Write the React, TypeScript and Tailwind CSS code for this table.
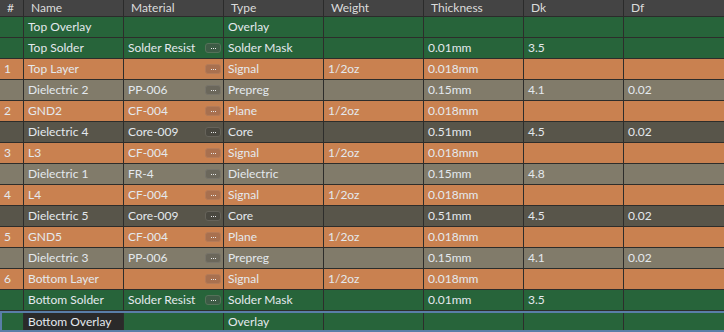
import React from "react";

type Kind = "green" | "orange" | "gray" | "core";

type Layer = {
  num: string;
  name: string;
  material: string;
  btn: boolean;
  type: string;
  weight: string;
  thickness: string;
  dk: string;
  df: string;
  kind: Kind;
  selected?: boolean;
};

const layers: Layer[] = [
  { num: "", name: "Top Overlay", material: "", btn: false, type: "Overlay", weight: "", thickness: "", dk: "", df: "", kind: "green" },
  { num: "", name: "Top Solder", material: "Solder Resist", btn: true, type: "Solder Mask", weight: "", thickness: "0.01mm", dk: "3.5", df: "", kind: "green" },
  { num: "1", name: "Top Layer", material: "", btn: true, type: "Signal", weight: "1/2oz", thickness: "0.018mm", dk: "", df: "", kind: "orange" },
  { num: "", name: "Dielectric 2", material: "PP-006", btn: true, type: "Prepreg", weight: "", thickness: "0.15mm", dk: "4.1", df: "0.02", kind: "gray" },
  { num: "2", name: "GND2", material: "CF-004", btn: true, type: "Plane", weight: "1/2oz", thickness: "0.018mm", dk: "", df: "", kind: "orange" },
  { num: "", name: "Dielectric 4", material: "Core-009", btn: true, type: "Core", weight: "", thickness: "0.51mm", dk: "4.5", df: "0.02", kind: "core" },
  { num: "3", name: "L3", material: "CF-004", btn: true, type: "Signal", weight: "1/2oz", thickness: "0.018mm", dk: "", df: "", kind: "orange" },
  { num: "", name: "Dielectric 1", material: "FR-4", btn: true, type: "Dielectric", weight: "", thickness: "0.15mm", dk: "4.8", df: "", kind: "gray" },
  { num: "4", name: "L4", material: "CF-004", btn: true, type: "Signal", weight: "1/2oz", thickness: "0.018mm", dk: "", df: "", kind: "orange" },
  { num: "", name: "Dielectric 5", material: "Core-009", btn: true, type: "Core", weight: "", thickness: "0.51mm", dk: "4.5", df: "0.02", kind: "core" },
  { num: "5", name: "GND5", material: "CF-004", btn: true, type: "Plane", weight: "1/2oz", thickness: "0.018mm", dk: "", df: "", kind: "orange" },
  { num: "", name: "Dielectric 3", material: "PP-006", btn: true, type: "Prepreg", weight: "", thickness: "0.15mm", dk: "4.1", df: "0.02", kind: "gray" },
  { num: "6", name: "Bottom Layer", material: "", btn: true, type: "Signal", weight: "1/2oz", thickness: "0.018mm", dk: "", df: "", kind: "orange" },
  { num: "", name: "Bottom Solder", material: "Solder Resist", btn: true, type: "Solder Mask", weight: "", thickness: "0.01mm", dk: "3.5", df: "", kind: "green" },
  { num: "", name: "Bottom Overlay", material: "", btn: false, type: "Overlay", weight: "", thickness: "", dk: "", df: "", kind: "green", selected: true },
];

const rowBg: Record<Kind, string> = {
  green: "bg-[#27643a]",
  orange: "bg-[#c98150]",
  gray: "bg-[#817b6a]",
  core: "bg-[#58554a]",
};

const btnBg: Record<Kind, string> = {
  green: "bg-[#3d5b45] border-[#557159]",
  orange: "bg-[#a8704f] border-[#b47b58]",
  gray: "bg-[#6b675b] border-[#78746a]",
  core: "bg-[#4a4840] border-[#66635a]",
};

const headers = ["Name", "Material", "Type", "Weight", "Thickness", "Dk", "Df"];

const DotsButton = ({ kind }: { kind: Kind }) => (
  <div className={`flex items-center justify-center gap-[1px] w-[16px] h-[10px] rounded-[3px] border ${btnBg[kind]}`}>
    <span className="w-[1px] h-[1px] bg-[#e8e8e8]" />
    <span className="w-[1px] h-[1px] bg-[#e8e8e8]" />
    <span className="w-[1px] h-[1px] bg-[#e8e8e8]" />
  </div>
);

const Cell = ({ children, className = "" }: { children?: React.ReactNode; className?: string }) => (
  <div className={`w-[100px] shrink-0 flex items-center pl-[4px] border-r border-[#2d2d2b] ${className}`}>
    {children}
  </div>
);

export default function App() {
  return (
    <div
      className="w-[724px] h-[332px] overflow-hidden bg-[#3a3a3a] text-[12px] text-[#e4e9ee] leading-none"
      style={{ fontFamily: "Lato, 'Liberation Sans', sans-serif" }}
    >
      {/* Header */}
      <div className="flex h-[17px] bg-[#444444] border-b border-[#2b2b2b] text-[#dcdcdc]">
        <div className="w-[24px] shrink-0 flex items-center pl-[7px] border-r border-[#2b2b2b]">#</div>
        {headers.map((h) => (
          <div
            key={h}
            className="w-[100px] shrink-0 flex items-center pl-[7px] border-r border-[#2b2b2b] last:border-r-0"
          >
            {h}
          </div>
        ))}
      </div>

      {/* Rows */}
      {layers.map((l, i) => (
        <div
          key={i}
          className={`flex h-[21px] ${rowBg[l.kind]} ${
            l.selected ? "border-y-2 border-l-2 border-[#5a7ea8]" : "border-b border-[#2d2d2b]"
          }`}
        >
          <div className={`${l.selected ? "w-[22px]" : "w-[24px]"} shrink-0 flex items-center pl-[4px] border-r border-[#2d2d2b]`}>
            {l.num}
          </div>
          <Cell className={l.selected ? "bg-[#2a2a2a]" : ""}>{l.name}</Cell>
          <Cell className="justify-between pr-[2px]">
            <span>{l.material}</span>
            {l.btn && <DotsButton kind={l.kind} />}
          </Cell>
          <Cell>{l.type}</Cell>
          <Cell>{l.weight}</Cell>
          <Cell>{l.thickness}</Cell>
          <Cell>{l.dk}</Cell>
          <Cell className="border-r-0">{l.df}</Cell>
        </div>
      ))}
    </div>
  );
}
